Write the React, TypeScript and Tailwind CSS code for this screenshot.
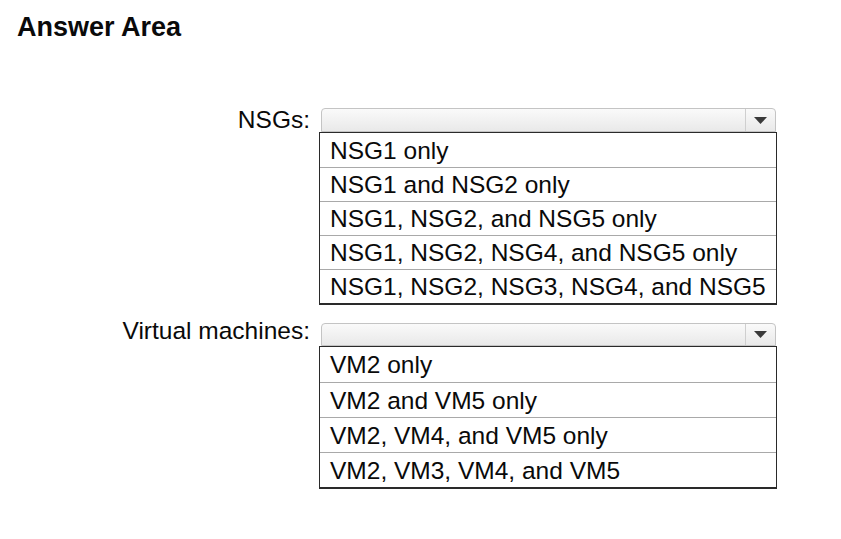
import React from 'react';

const nsgOptions = [
    'NSG1 only',
    'NSG1 and NSG2 only',
    'NSG1, NSG2, and NSG5 only',
    'NSG1, NSG2, NSG4, and NSG5 only',
    'NSG1, NSG2, NSG3, NSG4, and NSG5',
];

const vmOptions = ['VM2 only', 'VM2 and VM5 only', 'VM2, VM4, and VM5 only', 'VM2, VM3, VM4, and VM5'];

const DropBox = ({ options, rowClass, boxClass }: { options: string[]; rowClass: string; boxClass: string }) => {
    return (
        <div className="flex flex-col">
            <div className={`ml-[2px] mr-[1px] flex rounded-t-[4px] border border-[#c4c4c4] bg-gradient-to-b from-[#fafafa] to-[#e9e9e9] ${boxClass}`}>
                <div className="flex-1"></div>
                <div className="flex w-[30px] items-center justify-center border-l border-[#cfcfcf]">
                    <svg width="13" height="7" viewBox="0 0 13 7">
                        <path d="M0 0 L13 0 L6.5 7 Z" fill="#3a3a3a" />
                    </svg>
                </div>
            </div>
            <div className="border border-[#2a2a2a] border-b-2 bg-white">
                {options.map((opt, i) => (
                    <div
                        key={i}
                        className={`flex items-center pt-[2px] pl-[10px] text-[24.5px] text-[#0a0a0a] ${rowClass} ${i > 0 ? 'border-t border-[#a9a9a9]' : ''}`}
                    >
                        {opt}
                    </div>
                ))}
            </div>
        </div>
    );
};

const App = () => {
    return (
        <div className="min-h-[539px] w-[841px] bg-white" style={{ fontFamily: '"Liberation Sans", Arial, sans-serif' }}>
            <h1 className="pl-[17px] pt-[14px] text-[27px] font-bold leading-[27px] text-[#0a0a0a]">Answer Area</h1>
            <div className="mt-[67px] grid grid-cols-[310px_458px] gap-x-[9px]">
                <div className="text-right text-[24.5px] leading-[24px] text-[#0a0a0a]">NSGs:</div>
                <DropBox options={nsgOptions} rowClass="h-[34px]" boxClass="h-[24px]" />
                <div className="mt-[14px] text-right text-[24.5px] leading-[24px] text-[#0a0a0a]">Virtual machines:</div>
                <div className="mt-[18px]">
                    <DropBox options={vmOptions} rowClass="h-[35px]" boxClass="h-[23px]" />
                </div>
            </div>
        </div>
    );
};

export default App;
